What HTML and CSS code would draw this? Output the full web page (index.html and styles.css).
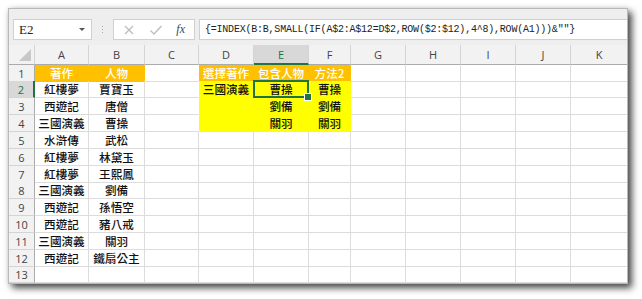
FILE: index.html
```html
<!DOCTYPE html>
<html>

<head>
  <meta charset="utf-8">
  <link rel="stylesheet" href="styles.css">
</head>

<body>
  <div class="window">
    <div class="formula-bar">
      <div class="namebox">
        <span class="name">E2</span>
        <span class="drop"></span>
      </div>
      <div class="dots">
        <span></span><span></span><span></span>
      </div>
      <div class="fxbox">
        <svg class="icon" width="12" height="12" viewBox="0 0 12 12">
          <path d="M2 2 L10 10 M10 2 L2 10" stroke="#bdbdbd" stroke-width="1.3" fill="none" />
        </svg>
        <svg class="icon" width="14" height="12" viewBox="0 0 14 12">
          <path d="M1.5 6.5 L5 10 L12.5 2" stroke="#bdbdbd" stroke-width="1.3" fill="none" />
        </svg>
        <span class="fx">fx</span>
      </div>
      <div class="formula">{=INDEX(B:B,SMALL(IF(A$2:A$12=D$2,ROW($2:$12),4^8),ROW(A1)))&amp;""}</div>
    </div>

    <div class="sheet">
      <div class="row head">
        <div class="c hdr corner"></div>
        <div class="c hdr">A</div>
        <div class="c hdr">B</div>
        <div class="c hdr">C</div>
        <div class="c hdr">D</div>
        <div class="c hdr sel">E</div>
        <div class="c hdr">F</div>
        <div class="c hdr">G</div>
        <div class="c hdr">H</div>
        <div class="c hdr">I</div>
        <div class="c hdr">J</div>
        <div class="c hdr">K</div>
      </div>

      <div class="row short">
        <div class="c num">1</div>
        <div class="c org">著作</div>
        <div class="c org">人物</div>
        <div class="c before-fill"></div>
        <div class="c org">選擇著作</div>
        <div class="c org">包含人物</div>
        <div class="c org">方法2</div>
        <div class="c"></div>
        <div class="c"></div>
        <div class="c"></div>
        <div class="c"></div>
        <div class="c"></div>
      </div>

      <div class="row">
        <div class="c num sel">2</div>
        <div class="c">紅樓夢</div>
        <div class="c">賈寶玉</div>
        <div class="c before-fill"></div>
        <div class="c yel">三國演義</div>
        <div class="c yel active">曹操</div>
        <div class="c yel">曹操</div>
        <div class="c"></div>
        <div class="c"></div>
        <div class="c"></div>
        <div class="c"></div>
        <div class="c"></div>
      </div>

      <div class="row">
        <div class="c num">3</div>
        <div class="c">西遊記</div>
        <div class="c">唐僧</div>
        <div class="c before-fill"></div>
        <div class="c yel"></div>
        <div class="c yel">劉備</div>
        <div class="c yel">劉備</div>
        <div class="c"></div>
        <div class="c"></div>
        <div class="c"></div>
        <div class="c"></div>
        <div class="c"></div>
      </div>

      <div class="row">
        <div class="c num">4</div>
        <div class="c">三國演義</div>
        <div class="c">曹操</div>
        <div class="c before-fill"></div>
        <div class="c yel"></div>
        <div class="c yel">關羽</div>
        <div class="c yel">關羽</div>
        <div class="c"></div>
        <div class="c"></div>
        <div class="c"></div>
        <div class="c"></div>
        <div class="c"></div>
      </div>

      <div class="row">
        <div class="c num">5</div>
        <div class="c">水滸傳</div>
        <div class="c">武松</div>
        <div class="c"></div>
        <div class="c"></div>
        <div class="c"></div>
        <div class="c"></div>
        <div class="c"></div>
        <div class="c"></div>
        <div class="c"></div>
        <div class="c"></div>
        <div class="c"></div>
      </div>

      <div class="row">
        <div class="c num">6</div>
        <div class="c">紅樓夢</div>
        <div class="c">林黛玉</div>
        <div class="c"></div>
        <div class="c"></div>
        <div class="c"></div>
        <div class="c"></div>
        <div class="c"></div>
        <div class="c"></div>
        <div class="c"></div>
        <div class="c"></div>
        <div class="c"></div>
      </div>

      <div class="row short">
        <div class="c num">7</div>
        <div class="c">紅樓夢</div>
        <div class="c">王熙鳳</div>
        <div class="c"></div>
        <div class="c"></div>
        <div class="c"></div>
        <div class="c"></div>
        <div class="c"></div>
        <div class="c"></div>
        <div class="c"></div>
        <div class="c"></div>
        <div class="c"></div>
      </div>

      <div class="row">
        <div class="c num">8</div>
        <div class="c">三國演義</div>
        <div class="c">劉備</div>
        <div class="c"></div>
        <div class="c"></div>
        <div class="c"></div>
        <div class="c"></div>
        <div class="c"></div>
        <div class="c"></div>
        <div class="c"></div>
        <div class="c"></div>
        <div class="c"></div>
      </div>

      <div class="row">
        <div class="c num">9</div>
        <div class="c">西遊記</div>
        <div class="c">孫悟空</div>
        <div class="c"></div>
        <div class="c"></div>
        <div class="c"></div>
        <div class="c"></div>
        <div class="c"></div>
        <div class="c"></div>
        <div class="c"></div>
        <div class="c"></div>
        <div class="c"></div>
      </div>

      <div class="row">
        <div class="c num">10</div>
        <div class="c">西遊記</div>
        <div class="c">豬八戒</div>
        <div class="c"></div>
        <div class="c"></div>
        <div class="c"></div>
        <div class="c"></div>
        <div class="c"></div>
        <div class="c"></div>
        <div class="c"></div>
        <div class="c"></div>
        <div class="c"></div>
      </div>

      <div class="row">
        <div class="c num">11</div>
        <div class="c">三國演義</div>
        <div class="c">關羽</div>
        <div class="c"></div>
        <div class="c"></div>
        <div class="c"></div>
        <div class="c"></div>
        <div class="c"></div>
        <div class="c"></div>
        <div class="c"></div>
        <div class="c"></div>
        <div class="c"></div>
      </div>

      <div class="row">
        <div class="c num">12</div>
        <div class="c">西遊記</div>
        <div class="c">鐵扇公主</div>
        <div class="c"></div>
        <div class="c"></div>
        <div class="c"></div>
        <div class="c"></div>
        <div class="c"></div>
        <div class="c"></div>
        <div class="c"></div>
        <div class="c"></div>
        <div class="c"></div>
      </div>

      <div class="row short">
        <div class="c num">13</div>
        <div class="c"></div>
        <div class="c"></div>
        <div class="c"></div>
        <div class="c"></div>
        <div class="c"></div>
        <div class="c"></div>
        <div class="c"></div>
        <div class="c"></div>
        <div class="c"></div>
        <div class="c"></div>
        <div class="c"></div>
      </div>
    </div>
  </div>
</body>

</html>
```

FILE: styles.css
```css
* {
  margin: 0;
  padding: 0;
  box-sizing: border-box;
}

html,
body {
  width: 642px;
  height: 299px;
  background: #fff;
  overflow: hidden;
}

body {
  padding: 8px 0 0 8px;
  font-family: "Noto Sans CJK TC", "Noto Sans", sans-serif;
}

.window {
  width: 620px;
  border: 1px solid #b9b9b9;
  background: #eeeeee;
  box-shadow: 4px 4px 7px rgba(0, 0, 0, 0.7), 0 0 5px rgba(0, 0, 0, 0.12);
}

/* formula bar */

.formula-bar {
  display: flex;
  height: 36px;
  padding: 10px 0 5px 4px;
}

.namebox {
  width: 79px;
  display: flex;
  align-items: center;
  justify-content: space-between;
  padding: 0 6px 0 5px;
  background: #fff;
  border: 1px solid #d0d0d0;
}

.name {
  font-family: "Liberation Serif", serif;
  font-size: 13px;
  color: #222;
}

.drop {
  width: 0;
  height: 0;
  border-left: 3px solid transparent;
  border-right: 3px solid transparent;
  border-top: 3px solid #555;
}

.dots {
  width: 21px;
  display: flex;
  flex-direction: column;
  align-items: center;
  justify-content: center;
  gap: 2px;
}

.dots span {
  width: 1px;
  height: 1px;
  background: #a8a8a8;
}

.fxbox {
  width: 82px;
  margin-right: 4px;
  display: flex;
  align-items: center;
  justify-content: space-between;
  padding: 0 9px 0 9px;
  background: #fff;
  border: 1px solid #d0d0d0;
}

.fx {
  font-family: "Liberation Serif", serif;
  font-style: italic;
  font-size: 12px;
  color: #444;
}

.formula {
  flex: 1;
  padding: 0 0 0 5px;
  background: #fff;
  border: 1px solid #d0d0d0;
  border-right: none;
  font-family: "Liberation Mono", monospace;
  font-size: 10px;
  letter-spacing: -0.22px;
  line-height: 19px;
  color: #222;
  white-space: nowrap;
}

/* sheet grid */

.sheet {
  background: #fff;
}

.row {
  display: grid;
  grid-template-columns: 26px 54px 56px 54px 55px 55px 42px 55px 55px 55px 55px 56px;
  height: 17px;
}

.row.short {
  height: 16px;
}

.row.head {
  height: 20px;
}

.c {
  display: flex;
  align-items: center;
  justify-content: center;
  border-right: 1px solid #dcdcdc;
  border-bottom: 1px solid #dcdcdc;
  font-size: 11.6px;
  font-weight: 500;
  color: #111;
  white-space: nowrap;
  overflow: visible;
}

.c:last-child {
  border-right: none;
}

.hdr {
  background: #f2f2f2;
  border-right-color: #d4d4d4;
  border-bottom: 1px solid #ababab;
  font-family: "Open Sans", sans-serif;
  font-weight: 400;
  font-size: 11px;
  color: #444;
}

.hdr.sel {
  background: #d8d8d8;
  border-bottom: 2px solid #217346;
  color: #217346;
}

.corner {
  position: relative;
}

.corner::after {
  content: "";
  position: absolute;
  right: 3px;
  bottom: 3px;
  width: 0;
  height: 0;
  border-left: 12px solid transparent;
  border-bottom: 12px solid #c8c8c8;
}

.num {
  background: #f2f2f2;
  border-right-color: #ababab;
  border-bottom-color: #d4d4d4;
  font-family: "Open Sans", sans-serif;
  font-weight: 400;
  font-size: 11px;
  color: #444;
}

.num.sel {
  background: #d8d8d8;
  border-right: 2px solid #217346;
  color: #217346;
}

.org {
  background: #ffc000;
  border-color: #ffc000;
  color: #fff;
}

.yel {
  background: #ffff00;
  border-color: #ffff00;
}

.before-fill {
  border-right-color: transparent;
}

.active {
  position: relative;
}

.active::before {
  content: "";
  position: absolute;
  left: -1px;
  top: -1px;
  right: -1px;
  bottom: -1px;
  border: 2px solid #217346;
}

.active::after {
  content: "";
  position: absolute;
  right: -4px;
  bottom: -4px;
  width: 6px;
  height: 6px;
  background: #217346;
  border: 1px solid #fff;
}
```
